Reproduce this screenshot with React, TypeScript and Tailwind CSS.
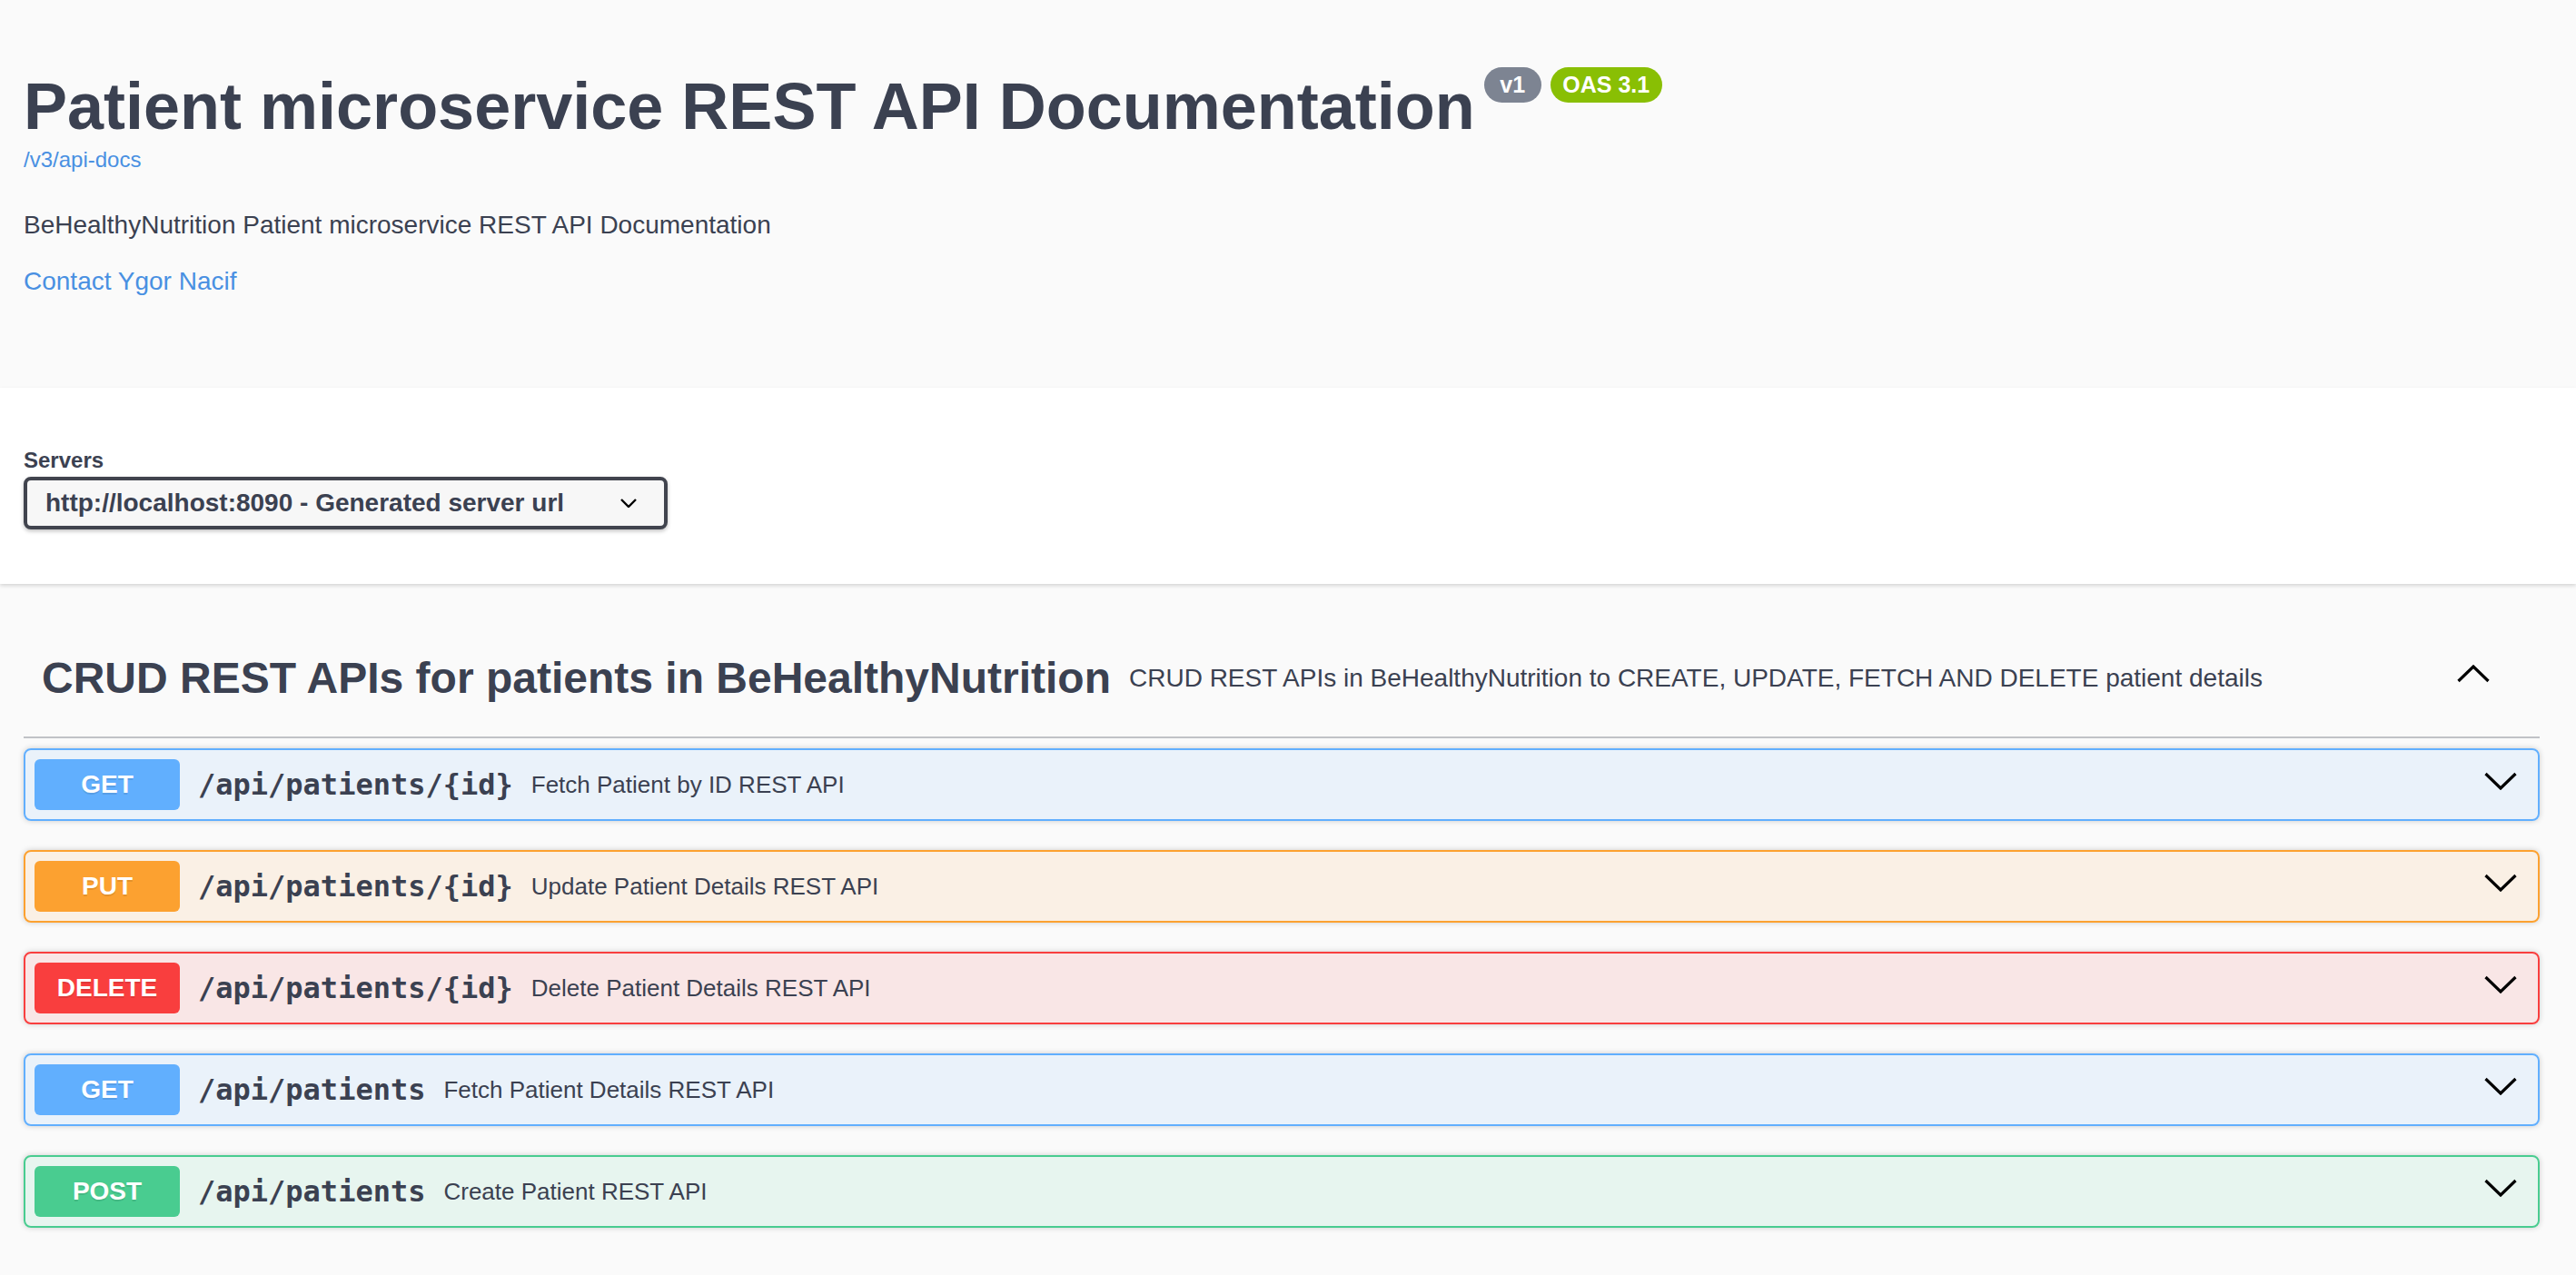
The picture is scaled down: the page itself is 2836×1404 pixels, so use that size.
import React from "react";

type Op = {
  method: string;
  path: string;
  desc: string;
  border: string;
  bg: string;
  badge: string;
};

const ops: Op[] = [
  {
    method: "GET",
    path: "/api/patients/{id}",
    desc: "Fetch Patient by ID REST API",
    border: "border-[#61affe]",
    bg: "bg-[rgba(97,175,254,0.1)]",
    badge: "bg-[#61affe]",
  },
  {
    method: "PUT",
    path: "/api/patients/{id}",
    desc: "Update Patient Details REST API",
    border: "border-[#fca130]",
    bg: "bg-[rgba(252,161,48,0.1)]",
    badge: "bg-[#fca130]",
  },
  {
    method: "DELETE",
    path: "/api/patients/{id}",
    desc: "Delete Patient Details REST API",
    border: "border-[#f93e3e]",
    bg: "bg-[rgba(249,62,62,0.1)]",
    badge: "bg-[#f93e3e]",
  },
  {
    method: "GET",
    path: "/api/patients",
    desc: "Fetch Patient Details REST API",
    border: "border-[#61affe]",
    bg: "bg-[rgba(97,175,254,0.1)]",
    badge: "bg-[#61affe]",
  },
  {
    method: "POST",
    path: "/api/patients",
    desc: "Create Patient REST API",
    border: "border-[#49cc90]",
    bg: "bg-[rgba(73,204,144,0.1)]",
    badge: "bg-[#49cc90]",
  },
];

function ChevronDown({ className }: { className?: string }) {
  return (
    <svg className={className} width="36" height="20" viewBox="0 0 36 20" fill="none">
      <polyline points="1.5,2 18,18 34.5,2" stroke="#000" strokeWidth="3.2" fill="none" />
    </svg>
  );
}

function ChevronUp({ className }: { className?: string }) {
  return (
    <svg className={className} width="36" height="20" viewBox="0 0 36 20" fill="none">
      <polyline points="1.5,18 18,2 34.5,18" stroke="#000" strokeWidth="3.2" fill="none" />
    </svg>
  );
}

export default function App() {
  return (
    <div className="min-h-screen w-full bg-[#fafafa] font-['Liberation_Sans',Arial,sans-serif] text-[#3b4151]">
      {/* Info header */}
      <div className="pl-[26px] pr-[40px] pt-[74px] pb-[103px]">
        <div className="flex items-start">
          <h1 className="mt-[7px] text-[72px] leading-[72px] font-bold whitespace-nowrap">
            Patient microservice REST API Documentation
          </h1>
          <div className="ml-[10px] flex gap-[10px]">
            <span className="flex h-[39px] w-[63px] items-center justify-center rounded-full bg-[#7d8492] text-[25px] leading-[25px] font-bold text-white">
              v1
            </span>
            <span className="flex h-[39px] w-[123px] items-center justify-center rounded-full bg-[#89bf04] text-[25px] leading-[25px] font-bold text-white">
              OAS 3.1
            </span>
          </div>
        </div>
        <a className="mt-[11px] block text-[24px] leading-[24px] text-[#4990e2]">/v3/api-docs</a>
        <p className="mt-[46px] text-[28px] leading-[28px]">
          BeHealthyNutrition Patient microservice REST API Documentation
        </p>
        <a className="mt-[34px] block text-[28px] leading-[28px] text-[#4990e2]">Contact Ygor Nacif</a>
      </div>

      {/* Servers */}
      <div className="relative z-10 bg-white pl-[26px] pt-[68px] pb-[60px] shadow-[0_2px_4px_0_rgba(0,0,0,0.15)]">
        <div className="text-[24px] leading-[24px] font-bold">Servers</div>
        <div className="mt-[6px] flex h-[58px] w-[709px] items-center justify-between rounded-[8px] border-4 border-[#41444e] bg-[#f7f7f7] pl-[20px] pr-[30px] shadow-[0_2px_4px_0_rgba(0,0,0,0.25)]">
          <span className="text-[28px] leading-[28px] font-bold">http://localhost:8090 - Generated server url</span>
          <svg width="18" height="10" viewBox="0 0 18 10" fill="none">
            <polyline points="1,1 9,9 17,1" stroke="#000" strokeWidth="2.4" fill="none" />
          </svg>
        </div>
      </div>

      {/* Tag section */}
      <div className="pl-[26px] pr-[40px] pt-[40px] pb-[51px]">
        <div className="flex h-[130px] items-center border-b-2 border-[rgba(59,65,81,0.3)] pl-[20px] pr-[55px]">
          <h3 className="text-[48px] leading-[48px] font-bold whitespace-nowrap">
            CRUD REST APIs for patients in BeHealthyNutrition
          </h3>
          <span className="ml-[20px] text-[28px] leading-[28px] whitespace-nowrap">
            CRUD REST APIs in BeHealthyNutrition to CREATE, UPDATE, FETCH AND DELETE patient details
          </span>
          <ChevronUp className="ml-auto mb-[10px]" />
        </div>

        <div className="mt-[11px] flex flex-col gap-[32px]">
          {ops.map((op, i) => (
            <div
              key={i}
              className={`flex h-[80px] items-center rounded-[8px] border-2 ${op.border} ${op.bg} p-[10px] shadow-[0_0_6px_rgba(0,0,0,0.19)]`}
            >
              <span
                className={`flex h-[56px] w-[160px] shrink-0 items-center justify-center rounded-[6px] ${op.badge} text-[28px] leading-[28px] font-bold text-white [text-shadow:0_2px_0_rgba(0,0,0,0.1)]`}
              >
                {op.method}
              </span>
              <span className="px-[20px] font-['DejaVu_Sans_Mono',monospace] text-[32px] leading-[32px] font-bold whitespace-nowrap">
                {op.path}
              </span>
              <span className="text-[26px] leading-[26px] whitespace-nowrap">{op.desc}</span>
              <ChevronDown className="ml-auto mr-[13px] mb-[8px]" />
            </div>
          ))}
        </div>
      </div>
    </div>
  );
}
